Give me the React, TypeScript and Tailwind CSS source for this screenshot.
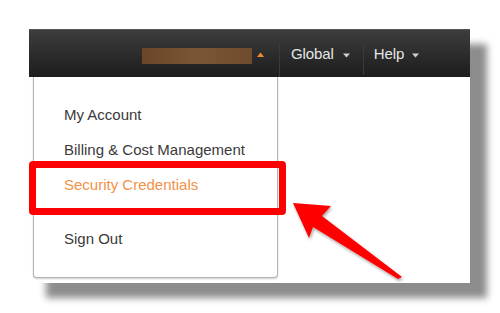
const MENU = [
  { label: "My Account", active: false },
  { label: "Billing & Cost Management", active: false },
  { label: "Security Credentials", active: true },
];

function Caret({ up, color }: { up?: boolean; color: string }) {
  return (
    <svg width="7" height="5" viewBox="0 0 7 5" className="block">
      <path d={up ? "M0 5 L3.5 0.5 L7 5 Z" : "M0 0.5 L3.5 4.5 L7 0.5 Z"} fill={color} />
    </svg>
  );
}

export default function App() {
  return (
    <div className="relative w-[500px] h-[313px] bg-white pt-[29px] pl-[29px] overflow-hidden font-['Liberation_Sans',Arial,sans-serif]">
      {/* screenshot card */}
      <div className="relative w-[441px] h-[254px] bg-white shadow-[17px_15px_7px_rgba(0,0,0,0.45)]">
        {/* top bar */}
        <div className="flex items-center h-[48px] bg-gradient-to-b from-[#3d3d3d] to-[#1d1d1d] border-t border-[#555]">
          <div className="ml-[113px] w-[110px] h-[16px] mt-[5px] bg-gradient-to-r from-[#6a4729] via-[#7a5535] to-[#6f4c2e]" />
          <div className="ml-[5px] mt-[2px]">
            <Caret up color="#f08a2c" />
          </div>
          <div className="ml-[15px] self-stretch mt-[13px] w-px bg-[#151515] border-r border-[#3a3a3a]" />
          <span className="ml-[11px] mt-[2px] text-[15px] text-[#e6e6e6] tracking-[-0.1px]">Global</span>
          <div className="ml-[9px] mt-[3px]">
            <Caret color="#d0d0d0" />
          </div>
          <div className="ml-[13px] self-stretch mt-[13px] mb-[2px] w-px bg-[#151515] border-r border-[#3a3a3a]" />
          <span className="ml-[10px] mt-[2px] text-[15px] text-[#e6e6e6] tracking-[-0.1px]">Help</span>
          <div className="ml-[8px] mt-[3px]">
            <Caret color="#d0d0d0" />
          </div>
        </div>

        {/* dropdown */}
        <div className="ml-[4px] w-[245px] h-[201px] bg-white border border-t-0 border-[#b5b5b5] rounded-b-[4px] shadow-[0_1px_2px_rgba(0,0,0,0.2)] pt-[21px] pl-[30px]">
          <div className="flex flex-col">
            {MENU.map((item) => (
              <div
                key={item.label}
                className={`h-[35px] flex items-center text-[15px] ${item.active ? "text-[#f39147]" : "text-[#3a3a3a]"}`}
              >
                {item.label}
              </div>
            ))}
            <div className="h-[19px]" />
            <div className="h-[35px] flex items-center text-[15px] text-[#3a3a3a]">Sign Out</div>
          </div>
        </div>

        {/* highlight box */}
        <div className="absolute left-0 top-[132px] w-[257px] h-[54px] border-[7px] border-[#ff0000] rounded-[4px]" />
      </div>

      {/* arrow */}
      <svg className="absolute left-0 top-0" width="500" height="313" viewBox="0 0 500 313">
        <defs>
          <filter id="sh" x="-20%" y="-20%" width="140%" height="140%">
            <feDropShadow dx="1" dy="2" stdDeviation="1.5" floodColor="#000" floodOpacity="0.35" />
          </filter>
        </defs>
        <path
          d="M293 203 L331 206 L322 216 L402 277 L398 279 L313 227 L309 238 Z"
          fill="#ff0000"
          filter="url(#sh)"
        />
      </svg>
    </div>
  );
}
